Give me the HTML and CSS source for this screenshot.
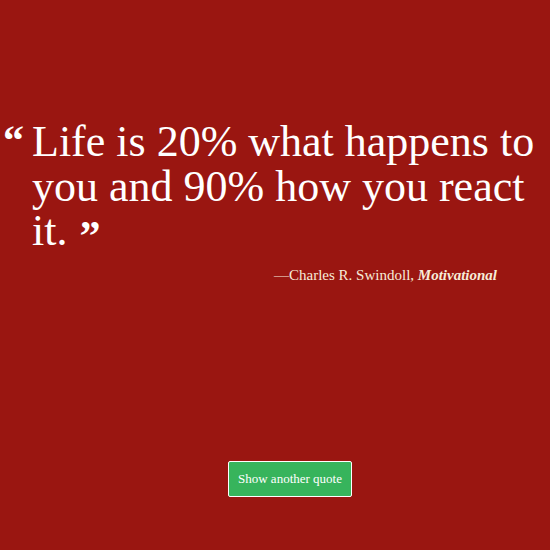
FILE: index.html
```html
<!DOCTYPE html>
<html>
<head>
<meta charset="utf-8">
<link rel="stylesheet" href="styles.css">
</head>
<body>
<main class="page">
  <figure class="quote-box">
    <blockquote class="quote">
      <span class="mark open">&ldquo;</span>
      <p class="quote-text">Life is 20% what happens to you and 90% how you react it.</p>
    </blockquote>
    <figcaption class="author">&mdash;Charles R. Swindoll, <cite class="category">Motivational</cite></figcaption>
  </figure>
  <div class="actions">
    <button class="btn">Show another quote</button>
  </div>
</main>
</body>
</html>
```

FILE: styles.css
```css
html, body {
  margin: 0;
  padding: 0;
  height: 100%;
  background: #9a1611;
}
body {
  font-family: "Liberation Serif", "DejaVu Serif", serif;
  color: #fff;
}
.page {
  height: 550px;
  display: flex;
  flex-direction: column;
}
.quote-box {
  margin: 0;
  padding: 120px 0 0 0;
}
.quote {
  margin: 0;
  display: flex;
  align-items: flex-start;
}
.mark,
.quote-text::after {
  font-family: "Liberation Serif", serif;
  font-weight: bold;
  font-size: 42px;
  line-height: 24px;
}
.mark.open {
  width: 32px;
  flex: none;
  padding-left: 3px;
  padding-top: 8px;
  box-sizing: border-box;
}
.quote-text::after {
  content: "\201D";
  display: inline-block;
  vertical-align: top;
  height: 24px;
  margin-top: 15px;
  margin-left: 12px;
}
.quote-text {
  margin: 0;
  font-size: 44px;
  line-height: 44.5px;
  padding-right: 8px;
}
.author {
  margin: 13px 0 0 0;
  padding-right: 53px;
  text-align: right;
  font-size: 15px;
  color: #f7ecd9;
}
.category {
  font-style: italic;
  font-weight: bold;
}
.actions {
  margin-top: auto;
  padding-bottom: 53px;
  padding-left: 30px;
  display: flex;
  justify-content: center;
}
.btn {
  font-family: "Liberation Serif", serif;
  font-size: 13px;
  color: #fff;
  background: #37b45c;
  border: 1px solid #fff;
  border-radius: 2px;
  width: 124px;
  height: 36px;
  padding: 0;
}
```
